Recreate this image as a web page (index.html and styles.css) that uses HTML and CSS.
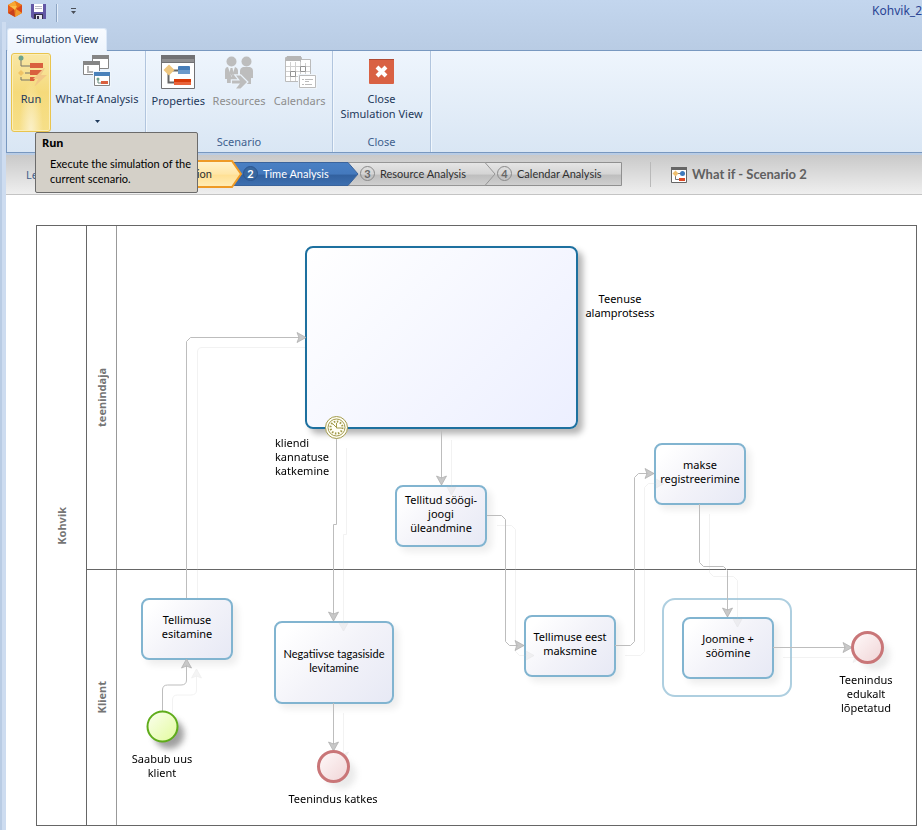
FILE: index.html
```html
<!DOCTYPE html>
<html lang="en">
<head>
<meta charset="utf-8">
<title>Kohvik_2</title>
<link rel="stylesheet" href="styles.css">
</head>
<body>
<div class="window">
  <header class="titlebar">
    <svg class="app-logo" width="16" height="16" viewBox="0 0 16 16" aria-hidden="true">
      <path d="M8 0l7 4v8l-7 4-7-4V4z" fill="#e8761c"/>
      <path d="M8 0l2 5-7 1-2-2z" fill="#f7a732"/>
      <path d="M8 0l7 4-5 2z" fill="#ee7a17"/>
      <path d="M15 4v8l-6-4z" fill="#d9481b"/>
      <path d="M9 8l6 4-7 4z" fill="#f09a2c"/>
      <path d="M1 4l6 4-6 4z" fill="#e65a1a"/>
      <path d="M7 8l1 8-7-4z" fill="#c7401c"/>
      <path d="M3 5l7 0-2 4z" fill="#fbbf4b"/>
    </svg>
    <button class="quick" type="button" aria-label="Save">
      <svg width="15" height="15" viewBox="0 0 15 15">
        <path d="M0 0h15v15H2l-2-2z" fill="#6257a5"/>
        <path d="M3 0h9v8H3z" fill="#fff"/>
        <path d="M4 2h7v1H4zM4 4h7v1H4z" fill="#b9b9c6"/>
        <path d="M3 10h9v5H3z" fill="#343048"/>
        <path d="M5 11h6v4H5z" fill="#e6e6ee"/>
        <path d="M6 12h2v3H6z" fill="#343048"/>
      </svg>
    </button>
    <span class="quick-divider"></span>
    <button class="quick" type="button" aria-label="Customize quick access toolbar">
      <svg width="5" height="6" viewBox="0 0 5 6"><path d="M0 0h5v1H0zM0 3h5L2.500 6z" fill="#4a4f58"/></svg>
    </button>
    <span class="doc-title">Kohvik_2</span>
  </header>

  <div class="frame">
    <nav class="tabs"><a class="tab" href="#simulation">Simulation View</a></nav>

    <section class="ribbon" id="simulation">
      <div class="group group-run">
        <div class="group-body">
          <button class="tool tool-run" type="button">
            <svg width="32" height="32" viewBox="0 0 32 32">
              <path d="M6 4v8h9M10 19h6M6 23v3h9" fill="none" stroke="#777468"/>
              <circle cx="6" cy="4" r="2.500" fill="#6da38c"/>
              <path d="M15 9h13v5H15zM15 16h13l-4 5h-9zM15 23h6l-2 4h-4z" fill="#d9603f"/>
              <path d="M6 16l3 3-3 3-3-3z" fill="#f0c466"/>
              <path d="M29 14l-11 11h5l-4 8 13-12h-6l4-7z" fill="#f2c887"/>
            </svg>
            <span>Run</span>
          </button>
          <button class="tool tool-whatif" type="button">
            <svg width="28" height="32" viewBox="0 0 28 32">
              <path d="M9.500 .500h16v13h-16z" fill="#fff" stroke="#858585"/><path d="M9 0h17v4H9z" fill="#858585"/>
              <path d="M.500 6.500h16v13H.500z" fill="#fff" stroke="#858585"/><path d="M0 6h17v4H0z" fill="#858585"/>
              <path d="M5 11v6h10" fill="none" stroke="#b5b5b5" stroke-width="2"/>
              <path d="M10 16h20v16H10z" fill="#eef5fc"/>
              <path d="M11.500 17.500h15v13h-15z" fill="#fff" stroke="#858585"/><path d="M11 17h16v4H11z" fill="#4a81ba"/>
              <path d="M15 23v5h4" fill="none" stroke="#6d8e80"/><circle cx="15" cy="24" r="1.500" fill="#6da38c"/>
              <path d="M18 26h7v3h-7z" fill="#d9603f"/>
            </svg>
            <span>What-If Analysis</span>
            <svg class="caret" width="5" height="3" viewBox="0 0 5 3"><path d="M0 0h5L2.500 3z" fill="#1e395b"/></svg>
          </button>
        </div>
      </div>
      <div class="group group-scenario">
        <div class="group-body">
          <button class="tool tool-large" type="button">
            <svg width="34" height="34" viewBox="0 0 34 34">
              <path d="M.500 .500h33v33H.500z" fill="#fff" stroke="#717174"/>
              <path d="M0 0h34v8H0z" fill="#717174"/><path d="M1 4h32v3H1z" fill="#8f8f91"/>
              <path d="M7.500 16v11.500H14M10 15.500h7" fill="none" stroke="#666" stroke-width="2"/>
              <path d="M8 9.500l5.500 5.500L8 20.500 2.500 15z" fill="#eec67f"/>
              <rect x="17" y="11" width="12" height="8" rx="1" fill="#477db8"/><path d="M17 15h12v4H17z" fill="#6d9aca"/>
              <path d="M13 24h17v6H13z" fill="#d83a08"/><path d="M13 27h17v3H13z" fill="#e9643b"/>
            </svg>
            <span>Properties</span>
          </button>
          <button class="tool tool-large" type="button" disabled>
            <svg width="34" height="34" viewBox="0 0 34 34" fill="#bdbdbd">
              <circle cx="9.500" cy="6.500" r="5"/><circle cx="24.500" cy="6.500" r="5"/>
              <path d="M6 12h7q3 1 3 4v9l-3 3H5v-4H3v-8q0-4 3-4z"/>
              <path d="M21 12h7q3 1 3 4v7h-2v6h-9l-2-6v-7q0-3 3-4z"/>
              <path d="M6 12l3.500 10L13 12z" fill="#eef5fb"/><path d="M8.500 13h2l1 5-2 3-2-3z"/>
              <path d="M10 25.500h8l-4-5h4.500l6.500 6.500-6.500 6.500H14l4-5h-8z" stroke="#eaf2fa" stroke-width="2.500" paint-order="stroke"/>
            </svg>
            <span>Resources</span>
          </button>
          <button class="tool tool-large" type="button" disabled>
            <svg width="34" height="34" viewBox="0 0 34 34">
              <path d="M2.500 2.500h16v24h-16z" fill="#fff" stroke="#bbb"/>
              <path d="M17.500 4.500h10v22h-10z" fill="#fff" stroke="#bbb"/>
              <path d="M2 6l2-5h14v5z" fill="#b5b5b5"/>
              <path d="M3 11.500h24M3 16.500h24M3 21.500h24M7.500 7v19M12.500 7v19M22.500 8v18M17.500 7v19" stroke="#d0d0d0"/>
              <path d="M7.500 16.500h5v5h-5zM17.500 11.500h5v5h-5z" fill="#fff" stroke="#949494"/>
              <path d="M15 19h19v15H15z" fill="#eff5fb"/>
              <path d="M16.500 20.500h16v12h-16z" fill="#fff" stroke="#bbb"/>
              <path d="M19 24.500h2M22 24.500h8M22 26.500h4M19 29.500h2M22 29.500h7" stroke="#bbb"/>
            </svg>
            <span>Calendars</span>
          </button>
        </div>
        <div class="group-label">Scenario</div>
      </div>
      <div class="group group-close">
        <div class="group-body">
          <button class="tool tool-close" type="button">
            <svg width="25" height="25" viewBox="0 0 25 25">
              <rect width="25" height="25" rx="1" fill="#d96143"/><path d="M0 0h25v1H0z" fill="#b14b34"/>
              <path d="M8 8l9 9M17 8l-9 9" stroke="#fff" stroke-width="4"/>
            </svg>
            <span>Close<br>Simulation View</span>
          </button>
        </div>
        <div class="group-label">Close</div>
      </div>
    </section>

    <div class="tooltip" role="tooltip">
      <strong>Run</strong>
      <p>Execute the simulation of the<br>current scenario.</p>
    </div>

    <section class="levels">
      <span class="levels-label">Level</span>
      <svg width="0" height="0" class="defs" aria-hidden="true">
        <defs>
          <linearGradient id="gold" x2="0" y2="1"><stop offset="0" stop-color="#fff3cf"/><stop offset=".5" stop-color="#ffe6a6"/><stop offset=".55" stop-color="#ffe094"/><stop offset="1" stop-color="#ffedb8"/></linearGradient>
          <linearGradient id="blue" x2="0" y2="1"><stop offset="0" stop-color="#4a80c4"/><stop offset=".5" stop-color="#4479bd"/><stop offset=".55" stop-color="#32619f"/><stop offset="1" stop-color="#3e70b0"/></linearGradient>
          <linearGradient id="grey" x2="0" y2="1"><stop offset="0" stop-color="#e6e6e6"/><stop offset=".5" stop-color="#d4d4d4"/><stop offset=".55" stop-color="#bebebe"/><stop offset="1" stop-color="#d0d0d0"/></linearGradient>
        </defs>
      </svg>
      <ol class="steps">
        <li class="step step-first">
          <svg class="step-shape" width="169" height="28" viewBox="0 0 169 28"><path d="M1 1h158l9 13-9 13H1z" fill="url(#gold)" stroke="#ee9a26" stroke-width="2"/></svg>
          <span>Process Validation</span>
        </li>
        <li class="step step-current">
          <svg class="step-shape" width="128" height="28" viewBox="0 0 128 28"><path d="M0 2.500h117l10 11.500-10 11.500H0z" fill="url(#blue)" stroke="#3a639b"/></svg>
          <b class="num">2</b><span>Time Analysis</span>
        </li>
        <li class="step step-resource">
          <svg class="step-shape" width="148" height="28" viewBox="0 0 148 28"><path d="M0 2.500h137l10 11.500-10 11.500H0z" fill="url(#grey)" stroke="#969696"/></svg>
          <b class="num">3</b><span>Resource Analysis</span>
        </li>
        <li class="step step-calendar">
          <svg class="step-shape" width="138" height="28" viewBox="0 0 138 28"><path d="M0 2.500h136.500v23H0z" fill="url(#grey)" stroke="#909090"/></svg>
          <b class="num">4</b><span>Calendar Analysis</span>
        </li>
      </ol>
      <h1 class="scenario">
        <svg width="16" height="16" viewBox="0 0 16 16" aria-hidden="true">
          <path d="M.500 .500h15v15H.500z" fill="#fff" stroke="#666"/><path d="M0 0h16v3H0z" fill="#666"/>
          <path d="M4.500 7v5.500H8M5 6.500h6" fill="none" stroke="#777"/>
          <path d="M4.500 3.500l3 3-3 3-3-3z" fill="#f0c070"/><circle cx="11.500" cy="6.500" r="2.500" fill="#3c78bb"/>
          <path d="M8 11h6v3H8z" fill="#dc4a26"/>
        </svg>
        What if - Scenario 2
      </h1>
    </section>

    <main class="canvas">
      <div class="pool">
        <div class="pool-name"><span>Kohvik</span></div>
        <div class="lane"><div class="lane-name"><span>teenindaja</span></div></div>
        <div class="lane lane-client"><div class="lane-name"><span>Klient</span></div></div>
      </div>

      <div class="subprocess"></div>
      <div class="loop"></div>
      <div class="task task-order">Tellimuse<br>esitamine</div>
      <div class="task task-feedback">Negatiivse tagasiside<br>levitamine</div>
      <div class="task task-handover">Tellitud söögi-<br>joogi<br>üleandmine</div>
      <div class="task task-pay">Tellimuse eest<br>maksmine</div>
      <div class="task task-register">makse<br>registreerimine</div>
      <div class="task task-eat">Joomine +<br>söömine</div>

      <svg class="flows" width="916" height="635" viewBox="6 195 916 635" aria-hidden="true">
        <defs>
          <marker id="arrow" viewBox="-10 -6 11 12" refX="0" refY="0" markerWidth="11" markerHeight="12" markerUnits="userSpaceOnUse" orient="auto">
            <path d="M0 0L-9-5-7 0-9 5z" fill="#c8c8c8" stroke="#b0b0b0" stroke-width=".8"/>
          </marker>
          <linearGradient id="start" x2="1" y2="1"><stop offset="0" stop-color="#fbfff0"/><stop offset="1" stop-color="#e2fb9c"/></linearGradient>
          <linearGradient id="end" x2="1" y2="1"><stop offset="0" stop-color="#fffafa"/><stop offset="1" stop-color="#f0d4d6"/></linearGradient>
          <filter id="soft" x="-50%" y="-50%" width="200%" height="200%"><feGaussianBlur stdDeviation="3"/></filter>
          <g id="links">
            <path d="M162.500 711V690q0-5 5-5H181q5.500 0 5.500-5V659"/>
            <path d="M336.500 438V524.500H333.500V621"/>
            <path d="M441.500 430V485"/>
            <path d="M487 515.500H501.500L505.500 519.500V641.500L509.500 645.500H524"/>
            <path d="M615 645.500H630.500L634.500 641.500V477.500L638.500 473.500H654"/>
            <path d="M699.500 504V562.500L703.500 566.500H723.500L727.500 570.500V617"/>
            <path d="M333.500 703V751"/>
            <path d="M773 647.500H852"/>
          </g>
        </defs>
        <g class="echo"><use href="#links" x="10" y="10"/><path class="plain" d="M197.500 598V352q0-4.500 4.500-4.500H305"/></g>
        <g class="link"><use href="#links"/><path d="M186.500 598V341.500L190.500 337.500H306"/></g>

        <circle cx="169" cy="734" r="15" fill="#777" opacity=".7" filter="url(#soft)"/>
        <circle cx="162.500" cy="726.500" r="15" fill="url(#start)" stroke="#5fac1b" stroke-width="2"/>
        <circle cx="341" cy="774" r="15" fill="#999" opacity=".2" filter="url(#soft)"/>
        <circle cx="333.500" cy="766.500" r="15" fill="url(#end)" stroke="#c97678" stroke-width="3"/>
        <circle cx="875" cy="655" r="15" fill="#999" opacity=".2" filter="url(#soft)"/>
        <circle cx="867.500" cy="647.500" r="15" fill="url(#end)" stroke="#c97678" stroke-width="3"/>

        <g fill="#fffef4" stroke="#a29a4c">
          <circle cx="336.500" cy="427.500" r="11"/><circle cx="336.500" cy="427.500" r="8.500"/>
          <circle cx="336.500" cy="427.500" r="6" stroke-dasharray="1.500 1.600" stroke-width="2"/>
          <path d="M336.500 423v5h5M333 424l3.500 3.500" fill="none"/>
        </g>
      </svg>

      <div class="label label-service">Teenuse<br>alamprotsess</div>
      <div class="label label-patience">kliendi<br>kannatuse<br>katkemine</div>
      <div class="label label-start">Saabub uus<br>klient</div>
      <div class="label label-aborted">Teenindus katkes</div>
      <div class="label label-done">Teenindus<br>edukalt<br>lõpetatud</div>
    </main>
  </div>
</div>
</body>
</html>
```
FILE: styles.css
```css
* { box-sizing: border-box; }

body {
  margin: 0;
  background: #bbcfe8;
  font: 11px/15px "Noto Sans", "Open Sans", sans-serif;
  color: #1e395b;
  overflow: hidden;
}

button {
  border: 0;
  padding: 0;
  background: none;
  font: inherit;
  color: inherit;
}

svg { display: block; }

.window {
  display: flex;
  flex-direction: column;
  min-height: 100vh;
  background: linear-gradient(#c3d6ee, #b9cce4 50px);
}

.titlebar {
  display: flex;
  align-items: center;
  height: 22px;
  padding-left: 7px;
}

.app-logo { margin: 0 8px 4px 0; }
.quick-divider { width: 2px; height: 18px; margin: 4px 13px 0 10px; border-left: 1px solid #8fa6c4; border-right: 1px solid #e4eefa; }

.doc-title {
  margin-left: auto;
  padding-bottom: 2px;
  font-size: 12px;
  color: #2a4494;
}

.frame {
  position: relative;
  display: flex;
  flex-direction: column;
  flex: 1;
  margin-left: 2px;
  border-left: 4px solid #cddcf0;
}

.tabs {
  display: flex;
  height: 29px;
  padding: 6px 1px 0;
  border-bottom: 1px solid #7898c0;
}

.tab {
  height: 24px;
  padding: 2px 8px 0;
  border: 1px solid #dbe8f8;
  border-bottom: 0;
  border-radius: 3px 3px 0 0;
  background: linear-gradient(#f8fbff, #eef5fd);
  color: #1e395b;
  text-decoration: none;
  white-space: nowrap;
}

.ribbon {
  display: flex;
  height: 102px;
  margin-bottom: 2px;
  padding-left: 2px;
  border-left: 1px solid #7898c0;
  border-bottom: 1px solid #7898c0;
  background: linear-gradient(#eef5fd, #e3edf8 55%, #d9e6f4);
}

.group {
  display: flex;
  flex-direction: column;
  justify-content: space-between;
  padding: 2px;
  border-right: 1px solid #b1c5de;
  box-shadow: 1px 0 #f1f7fd;
}

.group-run { width: 137px; }
.group-scenario { width: 187px; }
.group-close { width: 98px; }
.group-body { display: flex; }

.group-label {
  padding-bottom: 1px;
  text-align: center;
  color: #3e5f8e;
}

.tool {
  display: flex;
  flex-direction: column;
  align-items: center;
  white-space: nowrap;
}

.tool:disabled { color: #8d8d8d; }

.tool-run {
  width: 40px;
  height: 79px;
  gap: 5px;
  border: 1px solid #e9c44e;
  border-radius: 3px;
  background: radial-gradient(ellipse at 50% 100%, #fbf0c8, transparent 45%), linear-gradient(#f9e7a6, #f5da7b 50%, #f6df88);
  box-shadow: inset 0 0 0 1px #fbeeb8;
}

.tool-whatif { flex: 1; padding-top: 2px; gap: 4px; }
.caret { margin-top: 10px; }
.tool-large { flex: 1; padding-top: 2px; gap: 4px; }
.tool-close { flex: 1; padding-top: 6px; gap: 7px; }

.tooltip {
  position: absolute;
  z-index: 5;
  top: 110px;
  left: 29px;
  width: 163px;
  padding: 2px 6px 6px;
  border: 1px solid #6b6b6b;
  border-radius: 2px;
  background: #d4d0c8;
  color: #000;
  white-space: nowrap;
}

.tooltip p { margin: 6px 0 0 8px; font-family: Lato, sans-serif; }

.levels {
  display: flex;
  align-items: center;
  height: 40px;
  padding-left: 20px;
  border-bottom: 1px solid #c4c4c4;
  background: linear-gradient(#c9c9c9, #efefef);
}

.levels-label { width: 47px; color: #44618c; }
.defs { position: absolute; }

.steps {
  display: flex;
  margin: 0 28px 2px 0;
  padding: 0;
  list-style: none;
  font-family: Lato, sans-serif;
}

.step {
  position: relative;
  display: flex;
  align-items: center;
  height: 28px;
  color: #303030;
  white-space: nowrap;
}

.step-shape { position: absolute; left: 0; top: 0; }
.step span, .num { position: relative; }
.step-first { width: 158px; z-index: 4; justify-content: flex-end; padding-right: 19px; }
.step-current { width: 117px; z-index: 3; color: #fff; }
.step-resource { width: 137px; z-index: 2; }
.step-calendar { width: 137px; z-index: 1; }

.num {
  width: 15px;
  height: 15px;
  margin: 0 5px 0 12px;
  border: 1px solid #8a8a8a;
  border-radius: 50%;
  line-height: 13px;
  text-align: center;
  color: #666;
}

.step-current .num { border-color: #2c5590; background: #39689f; color: #fff; }

.scenario {
  display: flex;
  align-items: center;
  gap: 5px;
  height: 25px;
  margin: 0;
  padding-left: 20px;
  border-left: 1px solid #b9b9b9;
  font-family: Lato, sans-serif;
  font-size: 13px;
  color: #606060;
  white-space: nowrap;
}

.canvas {
  position: relative;
  flex: 1;
  padding: 30px 5px 4px 30px;
  background: #fff;
  line-height: 14px;
  color: #000;
}

.pool {
  display: grid;
  grid-template-columns: 50px 1fr;
  grid-template-rows: 344px 255px;
  border: 1px solid #666;
}

.pool-name { grid-row: span 2; border-right: 1px solid #666; }
.pool-name, .lane-name { display: flex; align-items: center; justify-content: center; font-weight: bold; color: #757575; }
.pool-name span, .lane-name span { writing-mode: vertical-rl; transform: rotate(180deg); }
.lane { display: flex; border-bottom: 1px solid #666; }
.lane-client { border-bottom: 0; }
.lane-name { width: 30px; border-right: 1px solid #999; }

.subprocess {
  position: absolute;
  left: 299px;
  top: 51px;
  width: 273px;
  height: 183px;
  border: 2px solid #1d709f;
  border-radius: 8px;
  background: linear-gradient(135deg, #fff, #ecefff);
  box-shadow: 5px 5px 6px #b5b5b5;
}

.loop {
  position: absolute;
  left: 656px;
  top: 403px;
  width: 130px;
  height: 99px;
  border: 2px solid #aecfe0;
  border-radius: 13px;
}

.task {
  position: absolute;
  display: flex;
  align-items: center;
  justify-content: center;
  width: 92px;
  height: 62px;
  padding-bottom: 4px;
  border: 2px solid #81b4d0;
  border-radius: 8px;
  background: linear-gradient(135deg, #fff 10%, #f3f3f9 50%, #e7e9f5);
  box-shadow: 5px 5px 7px #eee;
  text-align: center;
  white-space: nowrap;
}

.task-order { left: 135px; top: 403px; }
.task-feedback { left: 268px; top: 426px; width: 120px; height: 83px; font-family: Lato, sans-serif; }
.task-handover { left: 389px; top: 290px; }
.task-pay { left: 518px; top: 420px; }
.task-register { left: 648px; top: 248px; }
.task-eat { left: 676px; top: 422px; }

.flows { position: absolute; left: 0; top: 0; fill: none; }
.link, .echo { stroke: #bdbdbd; marker-end: url(#arrow); }
.echo { opacity: .2; }
.plain { marker-end: none; }

.label {
  position: absolute;
  width: 100px;
  text-align: center;
  white-space: nowrap;
}

.label-service { left: 564px; top: 97px; }
.label-patience { left: 269px; top: 241px; text-align: left; }
.label-start { left: 106px; top: 557px; }
.label-aborted { left: 277px; top: 597px; }
.label-done { left: 810px; top: 478px; }
```
